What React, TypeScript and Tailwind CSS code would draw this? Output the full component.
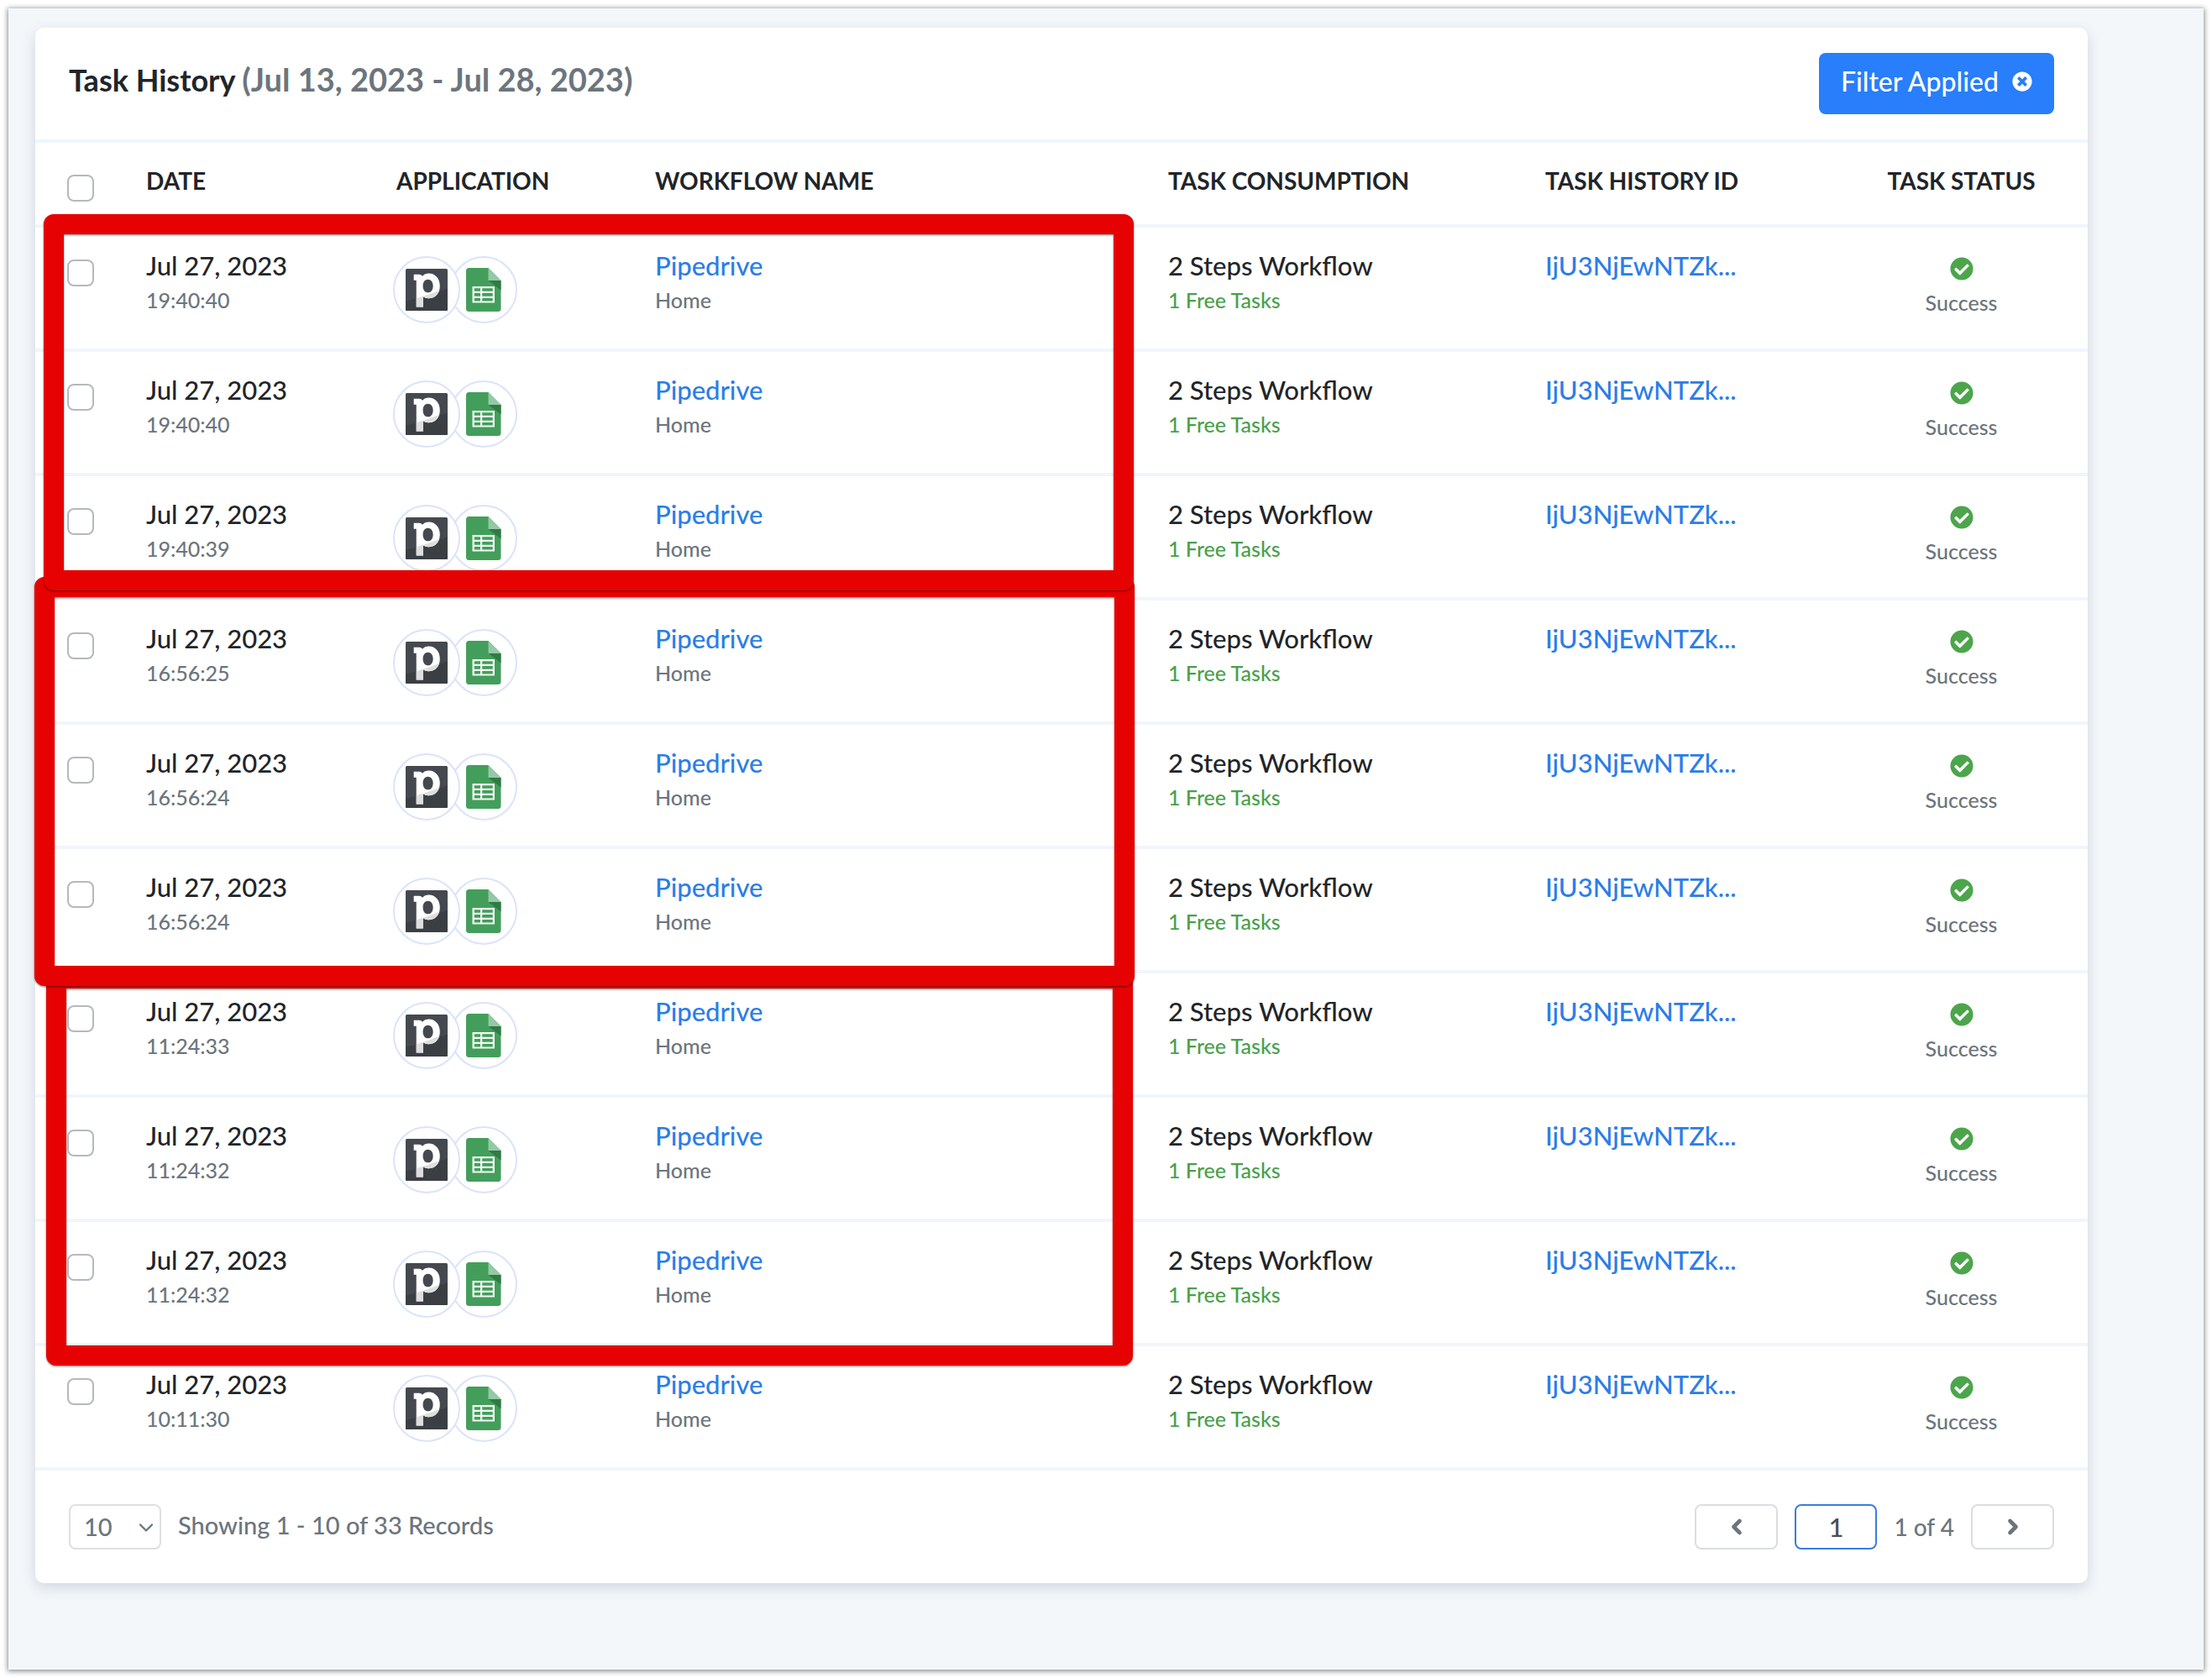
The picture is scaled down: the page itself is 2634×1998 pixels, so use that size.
import { ChevronDown, ChevronLeft, ChevronRight } from "lucide-react";
import { FaCheckCircle, FaTimesCircle } from "react-icons/fa";

interface Task {
  id: number;
  date: string;
  time: string;
}

const TIMES = [
  "19:40:40", "19:40:40", "19:40:39",
  "16:56:25", "16:56:24", "16:56:24",
  "11:24:33", "11:24:32", "11:24:32",
  "10:11:30",
];

const TASKS: Task[] = TIMES.map((time, i) => ({ id: i + 1, date: "Jul 27, 2023", time }));

const CHECKBOX =
  "block size-8 appearance-none rounded-lg border-2 border-[#b4b9be] bg-white checked:bg-[#287efb]";

export default function App() {
  return (
    <div className="min-h-screen bg-white p-2.5 font-['Lato','Open_Sans',sans-serif] font-medium text-[#212529]">
      <main className="min-h-[calc(100vh-20px)] bg-[#f3f7fa] pt-[23px] pr-[138px] pb-[103px] pl-8 shadow-[0_1px_6px_1px_rgba(0,0,0,0.45)]">
        <section className="relative rounded-[10px] bg-white shadow-[0_5px_16px_rgba(60,65,110,0.18)]">
          <header className="flex items-start justify-between border-b-4 border-[#f0f6fc] py-[30px] pr-10 pl-10">
            <h1 className="text-[36px] leading-[62px] font-bold">
              Task History{" "}
              <span className="text-[38px] text-[#6c757d]">(Jul 13, 2023 - Jul 28, 2023)</span>
            </h1>
            <button
              type="button"
              className="flex h-[73px] items-center gap-4 rounded-lg bg-[#287efb] px-[26px] pb-1.5 text-[32px] text-white"
            >
              Filter Applied
              <FaTimesCircle className="size-6" />
            </button>
          </header>

          <TaskTable />
          <Footer />

          {/* highlight boxes, one per batch of runs; the first lies on top */}
          <Highlight className="top-[1120px] left-[13px] h-[473px] w-[1294px]" />
          <Highlight className="top-[654px] -left-px h-[487px] w-[1310px]" />
          <Highlight className="top-[222px] left-2.5 h-[448px] w-[1298px]" />
        </section>
      </main>
    </div>
  );
}

function TaskTable() {
  return (
    <table className="w-full table-fixed border-separate border-spacing-0 text-left">
      <colgroup>
        <col className="w-[132px]" />
        <col className="w-[298px]" />
        <col className="w-[308px]" />
        <col />
        <col className="w-[449px]" />
        <col className="w-[345px]" />
        <col className="w-[301px]" />
      </colgroup>
      <thead>
        <tr className="h-[101px] align-top text-[28px] leading-10 [&>th]:border-b-4 [&>th]:border-[#f0f6fc] [&>th]:pt-[25px] [&>th]:font-bold">
          <th scope="col" className="pl-[38px]">
            <input type="checkbox" aria-label="Select all tasks" className={`${CHECKBOX} mt-[13px]`} />
          </th>
          <th scope="col">DATE</th>
          <th scope="col">APPLICATION</th>
          <th scope="col">WORKFLOW NAME</th>
          <th scope="col">TASK CONSUMPTION</th>
          <th scope="col">TASK HISTORY ID</th>
          <th scope="col" className="text-center">TASK STATUS</th>
        </tr>
      </thead>
      <tbody>
        {TASKS.map((task) => (
          <TaskRow key={task.id} task={task} />
        ))}
      </tbody>
    </table>
  );
}

function TaskRow({ task }: { task: Task }) {
  return (
    <tr className="h-[148px] align-top [&>td]:border-b-4 [&>td]:border-[#f0f6fc] [&>td]:pt-[25px]">
      <td className="pl-[38px]">
        <input type="checkbox" aria-label={`Select task ${task.id}`} className={`${CHECKBOX} mt-[13px]`} />
      </td>
      <td>
        <p className="text-[31px] leading-10">{task.date}</p>
        <p className="text-[25px] leading-[42px] text-[#6c757d]">{task.time}</p>
      </td>
      <td>
        <div className="mt-[9px] -ml-1 flex">
          <span className="z-1 flex size-20 items-center justify-center rounded-full border-2 border-[#dbe3fb] bg-white">
            <PipedriveLogo />
          </span>
          <span className="-ml-3 flex size-20 items-center justify-center rounded-full border-2 border-[#dbe3fb] bg-white">
            <SheetsLogo />
          </span>
        </div>
      </td>
      <td>
        <a href="#workflow" className="block text-[31px] leading-10 text-[#2b7de9]">Pipedrive</a>
        <p className="text-[25px] leading-[42px] text-[#6c757d]">Home</p>
      </td>
      <td>
        <p className="text-[31px] leading-10">2 Steps Workflow</p>
        <p className="text-[25px] leading-[42px] text-[#4ba04a]">1 Free Tasks</p>
      </td>
      <td>
        <a href="#task" className="block text-[31px] leading-10 text-[#2b7de9]">IjU3NjEwNTZk...</a>
      </td>
      <td className="text-center">
        <FaCheckCircle className="mx-auto mt-2.5 size-7 text-[#4ca54b]" />
        <p className="mt-[5px] text-[25px] leading-[42px] text-[#6c757d]">Success</p>
      </td>
    </tr>
  );
}

function Footer() {
  return (
    <footer className="flex items-center justify-between px-10 py-10 text-[29px] text-[#6c757d]">
      <div className="flex items-start gap-5">
        <div className="relative">
          <select
            aria-label="Records per page"
            defaultValue="10"
            className="block h-[54px] w-[110px] appearance-none rounded-lg border-2 border-[#dee0e4] bg-white pl-4"
          >
            <option>10</option>
            <option>25</option>
            <option>50</option>
          </select>
          <ChevronDown
            className="pointer-events-none absolute top-3.5 right-1 size-7"
            strokeWidth={2}
          />
        </div>
        <p className="leading-[50px]">Showing 1 - 10 of 33 Records</p>
      </div>

      <nav aria-label="Pagination" className="flex items-center gap-5">
        <button
          type="button"
          aria-label="Previous page"
          className="flex h-[54px] w-[99px] items-center justify-center rounded-lg border-2 border-[#dcdde5] bg-white"
        >
          <ChevronLeft className="size-7" strokeWidth={4} />
        </button>
        <input
          type="text"
          aria-label="Page"
          defaultValue="1"
          className="h-[54px] w-[98px] rounded-lg border-2 border-[#3b7ddd] bg-white text-center text-[31px] text-[#495057]"
        />
        <span className="text-[28px]">1 of 4</span>
        <button
          type="button"
          aria-label="Next page"
          className="flex h-[54px] w-[99px] items-center justify-center rounded-lg border-2 border-[#dcdde5] bg-white"
        >
          <ChevronRight className="size-7" strokeWidth={4} />
        </button>
      </nav>
    </footer>
  );
}

function Highlight({ className }: { className: string }) {
  return (
    <div
      className={`pointer-events-none absolute z-2 rounded-xl drop-shadow-[0_1px_1px_rgba(0,0,0,0.5)] ${className}`}
    >
      <div className="size-full rounded-xl border-24 border-[#e60202]" />
    </div>
  );
}

function PipedriveLogo() {
  return (
    <svg viewBox="0 0 49 49" className="size-[50px]" aria-label="Pipedrive">
      <rect width="49" height="49" rx="1.5" fill="#45494f" />
      <path d="M0 38C18 34 34 28 49 23V47.5Q49 49 47.5 49H1.5Q0 49 0 47.5Z" fill="#3b3f44" />
      <path
        fillRule="evenodd"
        fill="#fff"
        d="M9.5 6.5H16Q18.5 6.5 19.5 8.5Q22.500 5.500 27 5.500C34.500 5.500 40 11.500 40 20C40 29 34.500 34.500 27 34.500Q23 34.500 20.500 32.500V44.500H12.500V13.500H9.500ZM26 12.500C22.500 12.500 20.200 15.500 20.200 20C20.200 24.500 22.500 27.800 26 27.800C29.500 27.800 32 24.800 32 20C32 15.500 29.500 12.500 26 12.500Z"
      />
      <path
        fill="#dedede"
        d="M12.500 34.500L20.500 32.500V44.500H12.500ZM12.500 34.500C22 32 31 28.500 39 25.500C37 31.500 32.500 34.500 27 34.500Q23 34.500 20.500 32.500Z"
      />
    </svg>
  );
}

function SheetsLogo() {
  return (
    <svg viewBox="0 0 42 52" className="h-[52px] w-[42px]" aria-label="Google Sheets">
      <path d="M3.500 0H26.500L41.500 15V48.500Q41.500 52 38 52H3.500Q0 52 0 48.500V3.500Q0 0 3.500 0Z" fill="#439e5b" />
      <path d="M26.500 15H41.500V26.500Z" fill="#317a45" />
      <path d="M26.500 0L41.500 15H26.500Z" fill="#93c9a5" />
      <path
        fillRule="evenodd"
        fill="#f1f8f3"
        d="M7.500 22H34V41.500H7.500ZM9.800 24.200V27.800H17V24.200ZM19.200 24.200V27.800H31.700V24.200ZM9.800 30V33.700H17V30ZM19.200 30V33.700H31.700V30ZM9.800 35.900V39.400H17V35.900ZM19.200 35.900V39.400H31.700V35.900Z"
      />
    </svg>
  );
}
